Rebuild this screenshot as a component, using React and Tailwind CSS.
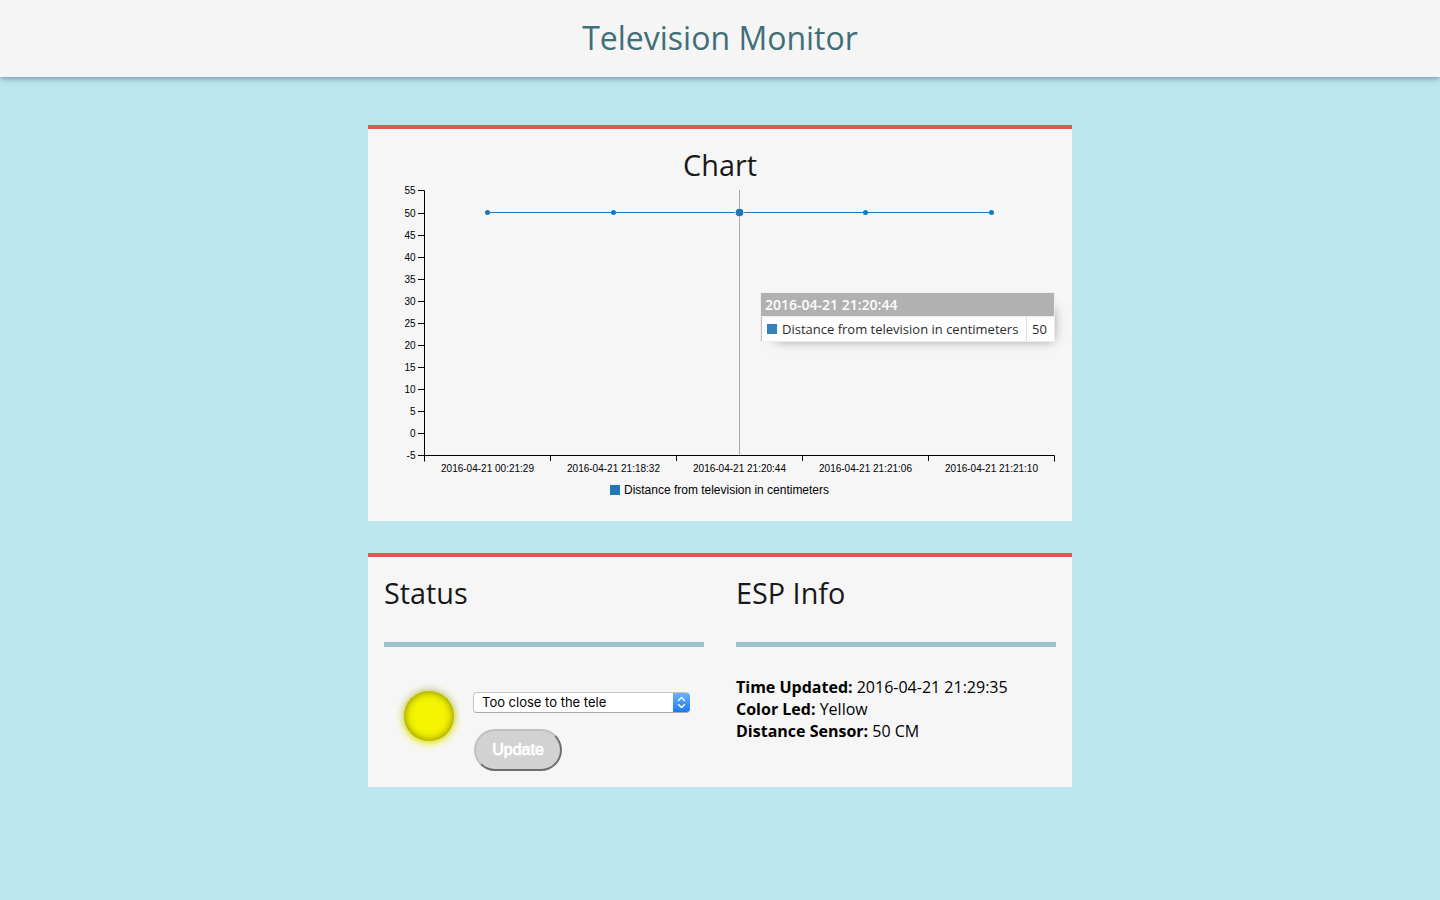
const yTicks = [55, 50, 45, 40, 35, 30, 25, 20, 15, 10, 5, 0, -5];
const times = [
  "2016-04-21 00:21:29",
  "2016-04-21 21:18:32",
  "2016-04-21 21:20:44",
  "2016-04-21 21:21:06",
  "2016-04-21 21:21:10",
];

function Chart() {
  return (
    <svg
      width="672"
      height="320"
      viewBox="0 0 672 320"
      className="block font-['Liberation_Sans',sans-serif] text-[10px]"
    >
      <line x1="355.5" x2="355.5" y1="5" y2="270" stroke="#aaa" />
      <path d="M34.5 5.5H40.5V270.5H34.5" fill="none" stroke="#000" />
      <path d="M40.5 276.5V270.5H670.5V276.5" fill="none" stroke="#000" />
      {yTicks.map((v, i) => {
        const y = i === 0 ? 5 : 6 + i * 22;
        return (
          <g key={v}>
            <line x1="34" x2="40" y1={y + 0.5} y2={y + 0.5} stroke="#000" />
            <text x="31.5" y={y + 4} textAnchor="end">
              {v}
            </text>
          </g>
        );
      })}
      <line x1="103.5" x2="607.5" y1="27.5" y2="27.5" stroke="#1f77b4" />
      {times.map((t, i) => (
        <g key={t}>
          {i > 0 && (
            <line x1={40.5 + i * 126} x2={40.5 + i * 126} y1="270" y2="276" stroke="#000" />
          )}
          <circle
            cx={103.5 + i * 126}
            cy="27.5"
            r={i === 2 ? 4.375 : 2.5}
            fill="#1f77b4"
            stroke={i === 2 ? "#f5f5f5" : "none"}
          />
          <text
            x={103.5 + i * 126}
            y="287"
            textAnchor="middle"
            textLength="93"
            lengthAdjust="spacing"
          >
            {t}
          </text>
        </g>
      ))}
      <rect x="226" y="300" width="10" height="10" fill="#1f77b4" />
      <text x="240" y="309" fontSize="12" textLength="205" lengthAdjust="spacing">
        Distance from television in centimeters
      </text>
    </svg>
  );
}

function Tooltip() {
  return (
    <div className="absolute left-[392px] top-[163px] flex w-[295px] flex-col border border-[#eee] bg-white opacity-90 shadow-[7px_7px_12px_-9px_#777]">
      <div className="h-[24px] border-b border-[#eee] bg-[#aaa] pl-[4px] text-[14px] font-semibold leading-[23px] text-white">
        2016-04-21 21:20:44
      </div>
      <div className="flex h-[24px] items-center border-l border-[#bbb] text-[13px] leading-[24px] text-[#111]">
        <span className="ml-[5px] size-[10px] bg-[#1f77b4]" />
        <span className="ml-[5px] w-[244px] whitespace-nowrap">
          Distance from television in centimeters
        </span>
        <span className="flex-1 border-l border-[#ddd] pl-[5px]">50</span>
      </div>
    </div>
  );
}

function Heading({ children }) {
  return <h2 className="text-[28.8px] leading-[40px] text-[#181818]">{children}</h2>;
}

export default function App() {
  return (
    <div className="flex min-h-screen flex-col bg-[#bbe6ee] font-['Open_Sans','Noto_Sans',sans-serif] text-black">
      <header className="flex h-[77px] justify-center bg-[#f5f5f5] shadow-[0_1px_6px_rgba(40,50,90,0.55)]">
        <h1 className="text-[32px] leading-[75px] text-[#3f6f79]">Television Monitor</h1>
      </header>
      <main className="mx-auto mt-12 flex w-[704px] flex-col gap-8">
        <section className="relative h-[396px] border-t-4 border-[#e8544f] bg-[#f6f6f6] p-4">
          <div className="text-center">
            <Heading>Chart</Heading>
          </div>
          <Chart />
          <Tooltip />
        </section>
        <section className="grid h-[234px] grid-cols-2 gap-8 border-t-4 border-[#e8544f] bg-[#f6f6f6] p-4">
          <div>
            <Heading>Status</Heading>
            <div className="mt-[29px] h-[5px] bg-[#9bc3cb]" />
            <div className="mt-[44px] flex pl-5">
              <div className="size-[50px] rounded-full bg-[#f5f500] shadow-[inset_0_0_8px_rgba(0,0,0,0.5),0_-1px_7px_1px_rgba(0,0,0,0.2),0_2px_8px_#ff0]" />
              <div className="ml-[19px] mt-px flex flex-col items-start">
                <div className="flex h-[21px] w-[217px] overflow-hidden rounded-[4px] border border-[#c4c4c4] border-b-[#aaa] border-r-0 bg-white font-['Inter',sans-serif] text-[13px]">
                  <span className="flex-1 pl-[8px] leading-[19px]">Too close to the tele</span>
                  <span className="-my-px flex w-[17px] items-center justify-center bg-linear-to-b from-[#6fb4fa] to-[#0d75fb]">
                    <svg width="9" height="13" viewBox="0 0 9 13" fill="none" stroke="#fff" strokeWidth="1.4" strokeLinecap="round" strokeLinejoin="round">
                      <path d="M1.5 4.5L4.5 1.5L7.5 4.5M1.5 8.5L4.5 11.5L7.5 8.5" />
                    </svg>
                  </span>
                </div>
                <button className="ml-px mt-[16px] h-[42px] w-[88px] rounded-[21px] border-2 border-b-[#6e6e6e] border-l-[#c0c0c0] border-r-[#6e6e6e] border-t-[#c0c0c0] bg-[#d2d2d2] font-['Liberation_Sans',sans-serif] text-[16px] text-white [-webkit-text-stroke:0.7px_white]">
                  Update
                </button>
              </div>
            </div>
          </div>
          <div>
            <Heading>ESP Info</Heading>
            <div className="mt-[29px] h-[5px] bg-[#9bc3cb]" />
            <div className="mt-[29px] text-[16px] leading-[22px]">
              <p><b>Time Updated:</b> 2016-04-21 21:29:35</p>
              <p><b>Color Led:</b> Yellow</p>
              <p><b>Distance Sensor:</b> 50 CM</p>
            </div>
          </div>
        </section>
      </main>
    </div>
  );
}
